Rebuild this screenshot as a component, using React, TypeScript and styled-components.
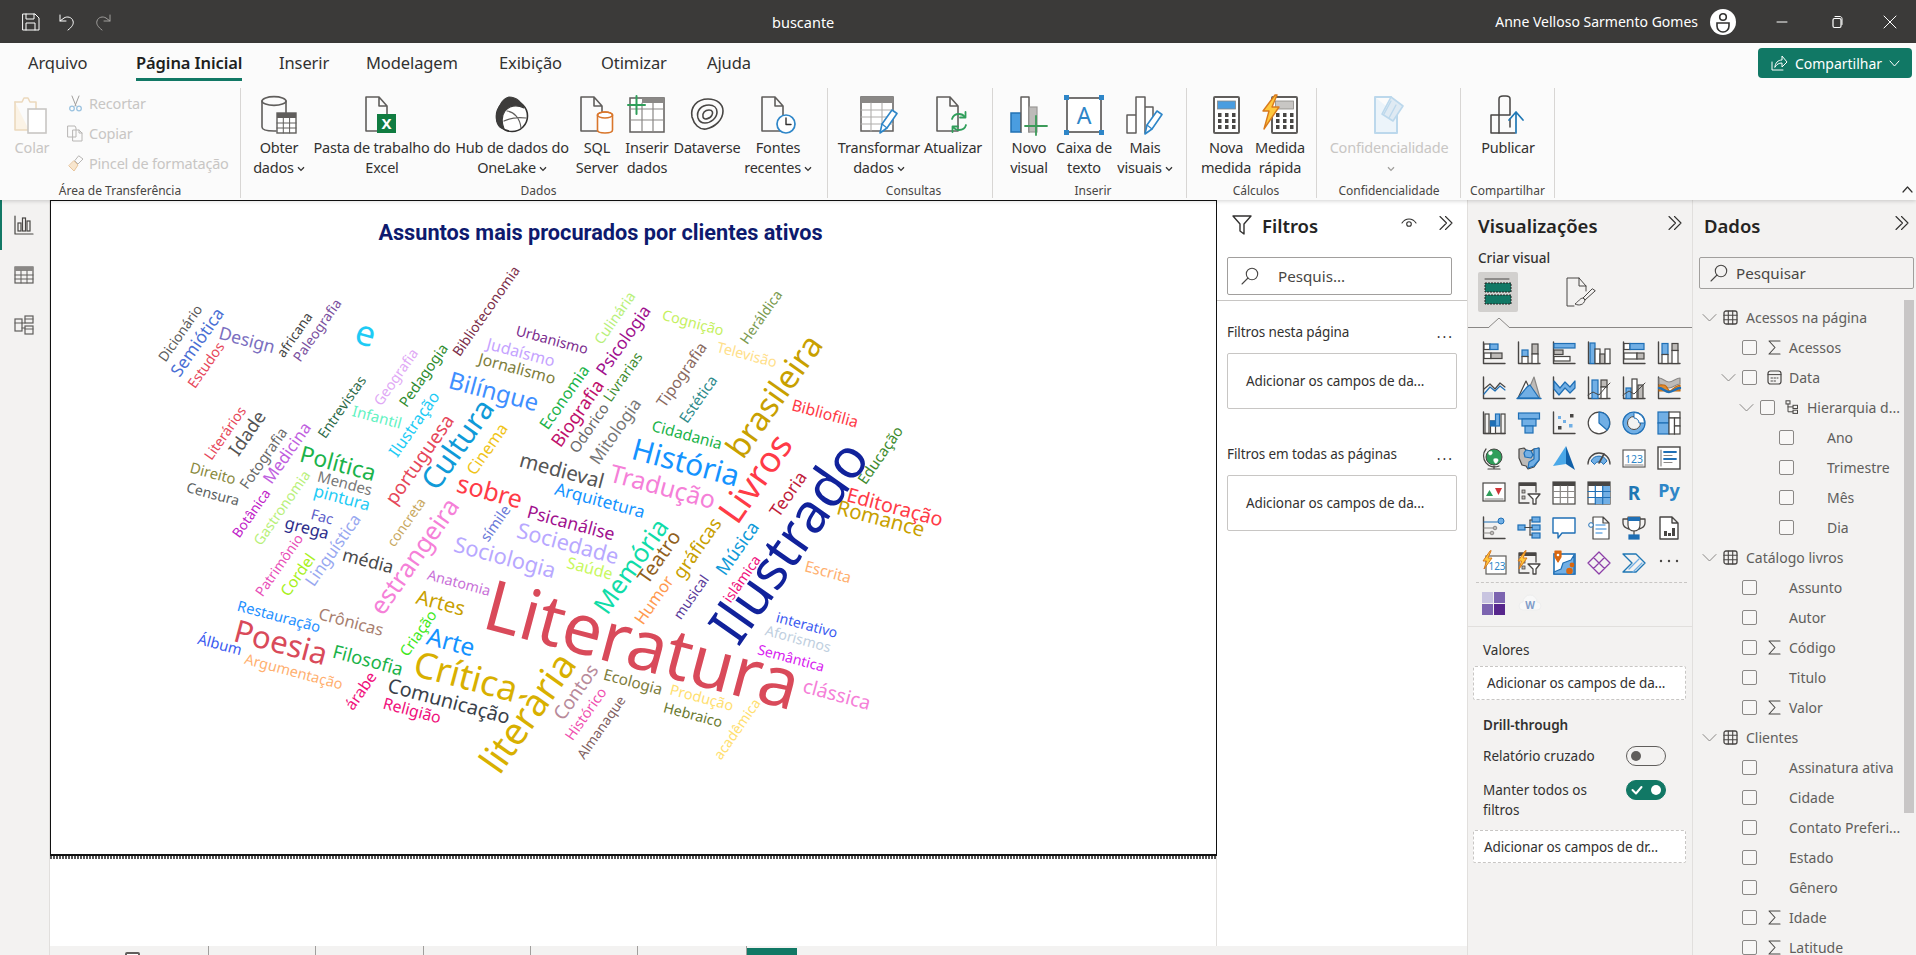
import React from "react";
import styled, { createGlobalStyle } from "styled-components";

const UI = '"Noto Sans", "Open Sans", sans-serif';
const GREEN = "#117865";
const D = "#484644";
const B = "#1f6fb5";
const L = "#71afe5";
const G = "#bebbb8";
const W = "#ffffff";

const Global = createGlobalStyle`
  html, body { margin: 0; padding: 0; background: #fff; overflow: hidden; }
  * { box-sizing: border-box; }
`;

const Page = styled.div`
  width: 1916px; height: 955px; display: flex; flex-direction: column; overflow: hidden;
  font-family: ${UI}; color: #323130; background: #fff;
`;

/* ---------- title bar ---------- */
const TitleBar = styled.header`
  height: 43px; background: #3b3a39; color: #fff; display: flex; align-items: center; flex: none;
`;
const QuickTools = styled.div`
  width: 772px; padding-left: 22px; display: flex; align-items: center; gap: 18px;
`;
const DocName = styled.div`font-size: 14.5px;`;
const Account = styled.div`margin-left: auto; display: flex; align-items: center; height: 100%;`;
const UserName = styled.span`font-size: 14px; margin-right: 12px;`;
const Avatar = styled.div`
  width: 26px; height: 26px; border-radius: 50%; background: #fff; margin-right: 18px;
  display: flex; align-items: center; justify-content: center;
`;
const WinButton = styled.div<{ $w: number }>`
  width: ${(p) => p.$w}px; height: 100%; display: flex; align-items: center; justify-content: center;
`;

/* ---------- ribbon ---------- */
const Ribbon = styled.section`
  height: 157px; flex: none; background: #fbfbfb; position: relative; z-index: 2;
  box-shadow: 0 1px 4px rgba(0, 0, 0, 0.18);
`;
const TabsRow = styled.nav`height: 39px; display: flex; padding-left: 28px;`;
const TabItem = styled.div<{ $w: number }>`width: ${(p) => p.$w}px; display: flex;`;
const TabLabel = styled.span<{ $active?: boolean }>`
  height: 38px; padding-top: 8px; font-size: 16.5px; line-height: 24px; letter-spacing: -0.1px; white-space: nowrap;
  font-weight: ${(p) => (p.$active ? 600 : 400)};
  color: ${(p) => (p.$active ? "#201f1e" : "#323130")};
  border-bottom: 3px solid ${(p) => (p.$active ? GREEN : "transparent")};
`;
const ShareButton = styled.div`
  margin: 5px 4px 4px auto; width: 154px; background: ${GREEN}; border-radius: 4px; color: #fff;
  display: flex; align-items: center; justify-content: center; gap: 7px; font-size: 14px;
`;
const Commands = styled.div`display: flex; margin-top: 6px; height: 110px;`;
const Group = styled.div<{ $w: number; $pad?: number; $last?: boolean }>`
  width: ${(p) => p.$w}px; flex: none; display: flex; flex-direction: column;
  border-right: ${(p) => (p.$last ? "none" : "1px solid #d8d6d4")};
  padding-left: ${(p) => p.$pad ?? 0}px;
`;
const GroupBody = styled.div`height: 96px; display: flex;`;
const GroupLabel = styled.div<{ $shift?: number }>`
  height: 14px; font-size: 12px; line-height: 14px; text-align: center; color: #484644; white-space: nowrap;
  margin-left: ${(p) => p.$shift ?? 0}px;
`;
const CmdButton = styled.div<{ $w: number; $off?: boolean }>`
  width: ${(p) => p.$w}px; flex: none; display: flex; flex-direction: column; align-items: center; padding-top: 7px;
  font-size: 14.5px; line-height: 20px; text-align: center; white-space: nowrap; letter-spacing: -0.2px;
  color: ${(p) => (p.$off ? "#c8c6c4" : "#323130")};
`;
const CmdIcon = styled.div`height: 40px; margin-bottom: 2px; display: flex; align-items: center; justify-content: center;`;
const SmallColumn = styled.div`display: flex; flex-direction: column; gap: 6px; padding: 3px 0 0 3px;`;
const SmallAction = styled.div`
  height: 24px; display: flex; align-items: center; gap: 5px; font-size: 14.5px; letter-spacing: -0.2px; color: #c8c6c4; white-space: nowrap;
`;
const Collapse = styled.div`position: absolute; right: 3px; bottom: 5px; line-height: 0;`;

/* ---------- main ---------- */
const Main = styled.main`flex: 1; display: flex; min-height: 0;`;
const Rail = styled.aside`width: 50px; flex: none; background: #f3f2f1; border-right: 1px solid #e1dfdd;`;
const RailItem = styled.div<{ $active?: boolean }>`
  height: 50px; display: flex; align-items: center; justify-content: center; padding-right: 4px;
  border-left: 2px solid ${(p) => (p.$active ? GREEN : "transparent")};
`;
const Center = styled.div`width: 1417px; flex: none; display: flex; flex-direction: column;`;
const CenterTop = styled.div`flex: 1; display: flex; min-height: 0;`;
const Canvas = styled.div`width: 1167px; flex: none; background: #fff; border-right: 1px solid #e1dfdd; display: flex; flex-direction: column;`;
const Report = styled.div`
  width: 1167px; height: 656px; flex: none; position: relative; background: #fff;
  border: 1px solid #111; border-bottom-width: 2px; overflow: hidden;
`;
const VisualTitle = styled.h1`
  margin: 0; padding: 19px 66px 0 0; text-align: center; font-family: Roboto, "Liberation Sans", sans-serif;
  font-weight: 700; font-size: 21.7px; line-height: 26px; color: #0d1a6e;
`;
const Word = styled.span<{ $x: number; $y: number; $size: number; $angle: number; $color: string }>`
  position: absolute; left: ${(p) => p.$x}px; top: ${(p) => p.$y}px; white-space: nowrap; line-height: 1;
  font-size: ${(p) => p.$size.toFixed(1)}px; color: ${(p) => p.$color};
  transform: translate(-50%, -50%) rotate(${(p) => p.$angle}deg);
`;
const DottedEdge = styled.div`
  height: 3px; flex: none;
  background: repeating-linear-gradient(90deg, #555 0, #555 2px, #fff 2px, #fff 3px);
`;
const PageTabs = styled.div`height: 9px; flex: none; background: #f3f2f1; display: flex; overflow: hidden;`;
const PageTab = styled.div<{ $w: number }>`
  width: ${(p) => p.$w}px; height: 9px; border-right: 1px solid #a19f9d; flex: none; position: relative;
`;
const PageTabGlyph = styled.div`
  position: absolute; left: 75px; top: 6px; width: 15px; height: 8px; border: 2px solid #605e5c; border-radius: 2px 2px 0 0; background: #fff;
`;
const PageTabActive = styled.div`width: 50px; height: 7px; margin-top: 2px; background: ${GREEN};`;

/* ---------- filters ---------- */
const Filters = styled.aside`width: 250px; flex: none; background: #fff; display: flex; flex-direction: column;`;
const PaneHeader = styled.div<{ $left: number; $right: number }>`
  height: 50px; flex: none; display: flex; align-items: center; padding: 0 ${(p) => p.$right}px 0 ${(p) => p.$left}px;
`;
const PaneTitle = styled.div<{ $ml?: number }>`
  margin-left: ${(p) => p.$ml ?? 0}px; font-size: 18.5px; font-weight: 600; color: #252423; white-space: nowrap;
`;
const HeaderTools = styled.div`margin-left: auto; display: flex; align-items: center; gap: 21px; padding-bottom: 4px;`;
const SearchBox = styled.div<{ $w: number; $h: number; $ml: number; $gap: number; $pl: number }>`
  flex: none; width: ${(p) => p.$w}px; height: ${(p) => p.$h}px; margin: 7px 0 0 ${(p) => p.$ml}px;
  border: 1px solid #a19f9d; border-radius: 2px; display: flex; align-items: center;
  padding-left: ${(p) => p.$pl}px; gap: ${(p) => p.$gap}px; font-size: 15.2px; color: #484644;
`;
const PaneRule = styled.div`height: 1px; flex: none; margin-top: 5px; background: #c8c6c4;`;
const FilterHead = styled.div<{ $mt: number }>`
  height: 18px; flex: none; margin: ${(p) => p.$mt}px 0 0 10px; width: 225px;
  display: flex; justify-content: space-between; font-size: 13.5px; line-height: 18px; letter-spacing: -0.1px; color: #323130;
`;
const Dots = styled.span`font-size: 14px; letter-spacing: 2px; color: #323130; line-height: 20px; margin-right: -2px;`;
const FilterWell = styled.div`
  flex: none; width: 230px; height: 56px; margin: 12px 0 0 10px; border: 1px solid #c8c6c4; border-radius: 2px;
  display: flex; align-items: center; padding-left: 18px; font-size: 13.5px; letter-spacing: -0.1px; color: #323130; white-space: nowrap;
`;

/* ---------- visualizations ---------- */
const Viz = styled.aside`
  width: 226px; flex: none; background: #f3f2f1; border-left: 1px solid #e1dfdd; border-right: 1px solid #e1dfdd;
  display: flex; flex-direction: column; overflow: hidden;
`;
const SubHead = styled.div`height: 16px; flex: none; margin-left: 10px; font-size: 13.5px; line-height: 16px; font-weight: 500; color: #323130;`;
const BuildRow = styled.div`height: 40px; flex: none; margin: 6px 0 0 10px; display: flex; align-items: center;`;
const BuildActive = styled.div`
  width: 40px; height: 40px; border-radius: 2px; background: #d2d0ce; display: flex; align-items: center; justify-content: center;
`;
const BuildOther = styled.div`margin-left: 48px; line-height: 0;`;
const BuildDivider = styled.div`height: 16px; flex: none; position: relative; border-bottom: 1px solid #8a8886;`;
const Caret = styled.svg`position: absolute; left: 20px; bottom: -1px;`;
const VizGrid = styled.div`
  flex: none; display: grid; grid-template-columns: repeat(6, 35px); grid-auto-rows: 35px; padding-left: 8px; margin-top: 7px;
`;
const VizCell = styled.div`display: flex; align-items: center; justify-content: center;`;
const DashRule = styled.div`flex: none; height: 0; margin: 2px 5px 0 8px; border-top: 1px dashed #c8c6c4;`;
const ExtraRow = styled.div`height: 34px; flex: none; margin-top: 3px; padding-left: 14px; display: flex; align-items: center; gap: 13px;`;
const SolidRule = styled.div`height: 1px; flex: none; margin-top: 6px; background: #e1dfdd;`;
const FieldHead = styled.div<{ $mt: number; $bold?: boolean }>`
  flex: none; margin: ${(p) => p.$mt}px 0 0 15px; font-size: 13.5px; line-height: 18px;
  font-weight: ${(p) => (p.$bold ? 600 : 400)}; color: #323130;
`;
const DropWell = styled.div<{ $h: number; $mt: number; $pl: number }>`
  flex: none; width: 213px; height: ${(p) => p.$h}px; margin: ${(p) => p.$mt}px 0 0 5px; background: #fff;
  border: 1px dashed #c8c6c4; border-radius: 2px; display: flex; align-items: center; padding-left: ${(p) => p.$pl}px;
  font-size: 13.5px; letter-spacing: -0.1px; color: #323130; white-space: nowrap;
`;
const ToggleRow = styled.div<{ $mt: number }>`
  flex: none; margin: ${(p) => p.$mt}px 0 0 15px; width: 183px; display: flex; justify-content: space-between; align-items: flex-start;
  font-size: 13.5px; line-height: 20px; color: #323130;
`;
const ToggleText = styled.div`width: 125px;`;
const Toggle = styled.div<{ $on?: boolean }>`
  width: 40px; height: 20px; border-radius: 10px; flex: none; display: flex; align-items: center; padding: 0 4px;
  justify-content: ${(p) => (p.$on ? "space-between" : "flex-start")};
  background: ${(p) => (p.$on ? GREEN : "transparent")};
  border: 1px solid ${(p) => (p.$on ? GREEN : "#605e5c")};
`;
const Knob = styled.div<{ $on?: boolean }>`
  width: 10px; height: 10px; border-radius: 50%; background: ${(p) => (p.$on ? "#fff" : "#605e5c")};
`;

/* ---------- data ---------- */
const Data = styled.aside`flex: 1; background: #f3f2f1; display: flex; flex-direction: column; position: relative; overflow: hidden;`;
const Tree = styled.ul`list-style: none; margin: 13px 0 0; padding: 0;`;
const TreeRow = styled.li<{ $pl: number }>`
  height: 30px; display: flex; align-items: center; padding-left: ${(p) => p.$pl}px;
  font-size: 14px; color: #605e5c; white-space: nowrap;
`;
const Box = styled.span`
  width: 15px; height: 15px; flex: none; border: 1px solid #8a8886; border-radius: 2px; background: #f8f7f6;
`;
const Slot = styled.span<{ $w: number; $ml: number }>`
  width: ${(p) => p.$w}px; margin-left: ${(p) => p.$ml}px; flex: none; display: flex; align-items: center; justify-content: center; line-height: 0;
`;
const RowText = styled.span<{ $ml: number }>`margin-left: ${(p) => p.$ml}px;`;
const Scrollbar = styled.div`position: absolute; right: 2px; top: 100px; width: 10px; height: 513px; background: #c8c6c6;`;

/* ---------- icon primitives ---------- */
const Svg = styled.svg.attrs<{ $s: number }>((p) => ({
  width: p.$s, height: p.$s, fill: "none", xmlns: "http://www.w3.org/2000/svg",
}))<{ $s: number }>`display: block; flex: none; overflow: visible;`;

type IconProps = { s?: number };
const R = ({ x, y, w, h, f = "none", c = D, sw = 1.2 }: { x: number; y: number; w: number; h: number; f?: string; c?: string; sw?: number }) => (
  <rect x={x} y={y} width={w} height={h} fill={f} stroke={c} strokeWidth={sw} />
);
const P = ({ d, f = "none", c = D, sw = 1.2 }: { d: string; f?: string; c?: string; sw?: number }) => (
  <path d={d} fill={f} stroke={c} strokeWidth={sw} strokeLinejoin="round" strokeLinecap="round" />
);
const Axis = () => <P d="M1.5 1v21.5H23" sw={1.4} />;
const Doc = ({ c = "#605e5c" }: { c?: string }) => <P d="M4 2h13l8 9v25H4z M17 2v9h8" c={c} sw={1.6} />;
const Pencil = ({ x = 0, y = 0 }: { x?: number; y?: number }) => (
  <g transform={`translate(${x} ${y})`}>
    <P d="M0 24 2 15 12 1l5 3.5L7 19z" f="#ffffff" c="#2e86c8" sw={1.6} />
    <P d="M2 15l5 4" c="#2e86c8" />
  </g>
);

const Chevrons = ({ s = 16 }: IconProps) => (
  <Svg $s={s} viewBox="0 0 16 16"><P d="M2 1.5 8.5 8 2 14.5M7.5 1.5 14 8l-6.5 6.5" c="#323130" sw={1.1} /></Svg>
);
const Magnifier = ({ s = 18 }: IconProps) => (
  <Svg $s={s} viewBox="0 0 18 18"><circle cx="11" cy="7" r="5.7" stroke="#484644" strokeWidth="1.1" /><P d="M7 11 1 17" sw={1.1} /></Svg>
);
const SmallChevron = ({ c = "#323130" }: { c?: string }) => (
  <svg width="8" height="6" viewBox="0 0 8 6" fill="none" style={{ marginLeft: 3, verticalAlign: 1 }}>
    <path d="M1 1.2 4 4.4 7 1.2" stroke={c} strokeWidth="1.3" />
  </svg>
);
const TreeChevron = () => (
  <Svg $s={15} viewBox="0 0 15 15"><P d="M1 4.5 7.5 11 14 4.5" c="#8a8886" sw={1} /></Svg>
);
const TableGlyph = () => (
  <Svg $s={15} viewBox="0 0 15 15">
    <rect x="1" y="1" width="13" height="13" rx="2" stroke="#484644" strokeWidth="1.3" />
    <P d="M1 5.2h13M1 9.8h13M5.3 1v13M9.7 1v13" sw={1.1} />
  </Svg>
);
const SigmaGlyph = () => (
  <Svg $s={15} viewBox="0 0 15 15"><P d="M13 1H2l6 6.5L2 14h11" sw={1.1} /></Svg>
);
const CalendarGlyph = () => (
  <Svg $s={15} viewBox="0 0 15 15">
    <rect x="1" y="1" width="13" height="13" rx="2.5" stroke="#484644" strokeWidth="1.2" />
    <P d="M1 4.6h13M4 8h1.5M7 8h1.5M10 8h1M4 11h1.5M7 11h1.5" sw={1} />
  </Svg>
);
const HierarchyGlyph = () => (
  <Svg $s={14} viewBox="0 0 14 14">
    <R x={1} y={0.8} w={4} h={3.2} sw={1} /><R x={8} y={5.3} w={4.5} h={3.2} sw={1} /><R x={8} y={10.2} w={4.5} h={3.2} sw={1} />
    <P d="M3 4v7.8h5M3 6.9h5" sw={1} />
  </Svg>
);

/* ---------- ribbon icons ---------- */
const I40 = ({ children }: { children: React.ReactNode }) => <Svg $s={40} viewBox="0 0 40 40">{children}</Svg>;
const PasteIcon = () => (
  <I40>
    <P d="M3 7h7l2-4h4l2 4h6v8" c="#ecd9bd" sw={1.6} /><P d="M3 7v28h14" c="#ecd9bd" f="#fbf3e6" sw={1.6} />
    <R x={16} y={14} w={18} h={24} f="#fff" c="#c8c6c4" sw={1.6} />
  </I40>
);
const GetDataIcon = () => (
  <I40>
    <ellipse cx="15" cy="6" rx="12" ry="4.4" stroke="#605e5c" strokeWidth="1.6" />
    <P d="M3 6v26c0 2.5 5 4 12 4h2M27 6v12" c="#605e5c" sw={1.6} />
    <R x={18} y={18} w={19} h={20} f="#fff" c="#605e5c" sw={1.4} />
    <rect x="18" y="18" width="19" height="5" fill="#605e5c" />
    <P d="M18 28h19M18 33h19M24.3 23v15M30.6 23v15" c="#605e5c" sw={1} />
  </I40>
);
const ExcelIcon = () => (
  <I40>
    <Doc /><rect x="15" y="19" width="19" height="19" fill="#107c41" />
    <text x="24.5" y="34" textAnchor="middle" fontSize="15" fontWeight="700" fill="#fff" fontFamily={UI}>X</text>
  </I40>
);
const OneLakeIcon = () => (
  <I40>
    <circle cx="20" cy="21" r="15.5" stroke="#323130" strokeWidth="1.6" fill="#fff" />
    <P d="M17 2c8 0 13 6 15 11-8-4-15-2-19 3-3 4-4 10-1 18C6 33 3 26 5 18 7 9 12 3 17 2z" f="#3d3c3b" c="#3d3c3b" />
    <P d="M15 16c7 1 13 7 14 17M12 26c6-3 13-4 22-3" c="#605e5c" />
  </I40>
);
const SqlIcon = () => (
  <I40>
    <Doc />
    <ellipse cx="28" cy="20" rx="7.5" ry="3" fill="#fff" stroke="#d9762b" strokeWidth="1.6" />
    <P d="M20.5 20v15c0 2 3 3 7.5 3s7.5-1 7.5-3V20" f="#fff" c="#d9762b" sw={1.6} />
    <ellipse cx="28" cy="20" rx="7.5" ry="3" stroke="#d9762b" strokeWidth="1.6" />
  </I40>
);
const EnterDataIcon = () => (
  <I40>
    <R x={3} y={3} w={34} h={34} c="#605e5c" sw={1.5} f="#fff" />
    <rect x="15" y="3" width="22" height="5" fill="#8a8886" />
    <P d="M3 14h34M3 25h34M15 8v29M26 8v29" c="#8a8886" sw={1.2} />
    <P d="M1 10h17M9.5 1v18" c="#2f9e5a" sw={2} />
  </I40>
);
const DataverseIcon = () => (
  <I40>
    <P d="M5 22C3 12 10 4 21 4c9 0 15 5 15 12 0 9-8 16-17 18-7 1-12-5-14-12z" c="#484644" sw={1.6} />
    <P d="M11 23c-2-7 3-13 11-13 5 0 8 3 8 7 0 6-6 11-12 11-3 0-6-2-7-5z" c="#484644" sw={1.6} />
    <P d="M16 22c-1-4 2-7 6-7s4 3 3 5c-1 3-8 6-9 2z" c="#484644" sw={1.6} />
  </I40>
);
const RecentIcon = () => (
  <I40>
    <Doc />
    <circle cx="28" cy="29" r="9" fill="#fff" stroke="#2e86c8" strokeWidth="1.7" />
    <P d="M28 23v6.5h5" c="#323130" sw={1.4} />
  </I40>
);
const TransformIcon = () => (
  <I40>
    <R x={2} y={2} w={32} h={34} c="#605e5c" sw={1.5} f="#fff" />
    <rect x="2" y="2" width="32" height="6" fill="#8a8886" />
    <P d="M2 15h32M2 22h32M2 29h32M12 8v28M23 8v28" c="#b0aeac" sw={1.1} />
    <Pencil x={21} y={14} />
  </I40>
);
const RefreshIcon = () => (
  <I40>
    <Doc />
    <P d="M19 24c1-3.5 4-5 7-5 2.500 0 4.500 1 6 3M33 30c-1 3.500-4 5-7 5-2.500 0-4.500-1-6-3" c="#2f9e5a" sw={1.8} />
    <P d="M32.500 17v5.500H27M19.500 37v-5.500H25" c="#2f9e5a" sw={1.8} />
  </I40>
);
const NewVisualIcon = () => (
  <I40>
    <R x={2} y={18} w={10} h={19} f="#4a9de0" c="#2272b4" sw={1.5} />
    <P d="M12 37V2h8v35" c="#605e5c" sw={1.5} f="#fff" /><R x={20} y={12} w={8} h={25} f="#bdbbb9" c="#9a9896" sw={1.2} />
    <P d="M16 31h22M27 21v19" c="#3b9a58" sw={1.8} />
  </I40>
);
const TextBoxIcon = () => (
  <I40>
    <R x={3} y={3} w={34} h={34} c="#484644" sw={1.5} f="#fff" />
    <g fill="#2e86c8"><rect x="0" y="0" width="5" height="5" /><rect x="35" y="0" width="5" height="5" /><rect x="0" y="35" width="5" height="5" /><rect x="35" y="35" width="5" height="5" /></g>
    <text x="20" y="29" textAnchor="middle" fontSize="23" fill="#2e86c8" fontFamily={UI}>A</text>
  </I40>
);
const MoreVisualsIcon = () => (
  <I40>
    <P d="M2 38V20h9v18zM11 38V2h9v36M20 38V12h8v14" c="#605e5c" sw={1.5} f="#fff" />
    <Pencil x={20} y={15} />
  </I40>
);
const Calculator = ({ x, w, screen }: { x: number; w: number; screen: string }) => (
  <g>
    <rect x={x} y={2} width={w} height={36} rx="1" fill="#fff" stroke="#605e5c" strokeWidth="2" />
    <rect x={x + 3.5} y={6} width={w - 7} height={8} fill={screen} stroke="#8a8886" strokeWidth=".8" />
    {[18, 24, 30].map((y) => [0, 1, 2].map((n) => (
      <rect key={`${y}${n}`} x={x + 4 + n * ((w - 11) / 2)} y={y} width="3.500" height="4" fill="#484644" />
    )))}
  </g>
);
const MeasureIcon = () => <I40><Calculator x={8} w={25} screen="#4a9de0" /></I40>;
const QuickMeasureIcon = () => (
  <I40>
    <Calculator x={12} w={25} screen="#c8c6c4" />
    <P d="M15 0 3 16h6L4 34l15-22h-7l5-12z" f="#ffc83d" c="#d97a1c" sw={1.4} />
  </I40>
);
const SensitivityIcon = () => (
  <I40>
    <P d="M6 2h16M6 2v36h22V20" c="#bcd8ec" sw={2} f="#ecf4fa" />
    <P d="M22 2 34 11 24 26l-11-7z" f="#dfeaf3" c="#bcd8ec" sw={1.6} />
    <P d="M22 6 15 19M27 10 20 23" c="#bcd8ec" sw={1.4} />
  </I40>
);
const PublishIcon = () => (
  <I40>
    <P d="M3 38V20h8v18zM11 38V4c0-2 2-3 4-3h3c2 0 4 1 4 3v16M11 20h11" c="#484644" sw={1.5} />
    <P d="M11 38h16M22 24v8" c="#484644" sw={1.5} />
    <P d="M28 38V18M21 25l7-8 7 8" c="#1f77b4" sw={1.7} />
  </I40>
);

/* ---------- visual gallery ---------- */
const Bolt = () => <P d="M8 0 1 10h3.500L2 18l8-11H6l3-7z" f="#ffc83d" c="#d97a1c" sw={1} />;
const SlicerShape = () => (
  <>
    <P d="M19 11V2H2v20h10" sw={1.3} /><rect x="2" y="2" width="17" height="3" fill={D} />
    <R x={5} y={9} w={3} h={3} f={G} c={D} sw={.8} /><R x={5} y={15} w={3} h={3} f={G} c={D} sw={.8} />
    <P d="M11 13h12l-4 5v5h-3v-5z" f={W} sw={1.3} />
  </>
);
const galleryIcons: React.ReactNode[] = [
  <><Axis /><R x={2} y={3} w={6} h={5.500} f={W} /><R x={8} y={3} w={8} h={5.500} f={L} c={B} /><R x={2} y={12} w={7} h={5.500} f={W} /><R x={9} y={12} w={11} h={5.500} f={G} /></>,
  <><Axis /><R x={5} y={9} w={6} h={6.500} f={L} c={B} /><R x={5} y={15.500} w={6} h={7} f={W} /><R x={15} y={3} w={6} h={10} f={G} /><R x={15} y={13} w={6} h={9.500} f={W} /></>,
  <><Axis /><R x={2} y={2.500} w={21} h={4.500} f={L} c={B} /><R x={2} y={9} w={9} h={4.500} f={G} /><R x={2} y={15.500} w={16} h={4.500} f={W} /></>,
  <><Axis /><R x={3} y={2} w={5} h={20.500} f={L} c={B} /><R x={8} y={8} w={5} h={14.500} f={W} /><R x={13} y={13} w={5} h={9.500} f={G} /><R x={18} y={8} w={5} h={14.500} f={W} /></>,
  <><Axis /><R x={2} y={2.500} w={6} h={6} f={W} /><R x={8} y={2.500} w={14} h={6} f={L} c={B} /><R x={2} y={12} w={13} h={6} f={W} /><R x={15} y={12} w={7} h={6} f={G} /></>,
  <><Axis /><R x={5} y={2.500} w={6} h={11} f={L} c={B} /><R x={5} y={13.500} w={6} h={9} f={W} /><R x={15} y={2.500} w={6} h={7} f={G} /><R x={15} y={9.500} w={6} h={13} f={W} /></>,
  <><Axis /><P d="M2 13l6-5 5 5 5-6 5 4" /><P d="M2 18l6-7 5 4 5-5 5 4" c={B} /></>,
  <><P d="M8 22 17 1l6 21z" f={G} c="#8a8886" /><P d="M1 22 9 5l8 17z" f={W} /><P d="M1 22l9-11 3-2 9 13z" f={L} c={B} /><P d="M0 22.500h24" c={B} sw={1.4} /></>,
  <><Axis /><P d="M2 5l6 7 5-6 5 5 5-6v7l-5 5-5-5-6 7-5-6z" f={L} c={B} /></>,
  <><Axis /><R x={5} y={4} w={6} h={18.500} f={L} c={B} /><R x={14} y={4} w={6} h={7} f={G} /><R x={14} y={11} w={6} h={11.500} f={W} /><P d="M1 19l5-3 6 3 6-7 5-5" sw={1} /></>,
  <><Axis /><R x={4} y={12} w={5} h={10.500} f={L} c={B} /><R x={10} y={3} w={5} h={19.500} f={W} /><R x={16} y={9} w={5} h={13.500} f={G} /><P d="M1 19l6-4 5 3 6-6 5-5" sw={1} /></>,
  <><Axis /><P d="M2 2c4 0 6 4 10 4s7-4 11-4v6c-4 0-7 4-11 4S6 8 2 8z" f={G} c="#8a8886" /><P d="M2 9h5c3 0 4 6 6 6s4-5 10-6v6H2z" f="#e08a2e" c="#c46a10" /><P d="M2 12c4 0 6 4 10 4s7-4 11-4" c={B} sw={2.4} /></>,
  <><Axis /><R x={3} y={3} w={4} h={19.500} /><R x={8.500} y={10} w={5} h={12.500} f={W} /><R x={8.500} y={10} w={5} h={5} f={B} c={B} /><R x={13.500} y={3} w={4} h={12} f={L} c={B} /><R x={19} y={3} w={4} h={19.500} /></>,
  <><R x={1.500} y={2} w={21} h={6} f={L} c={B} /><R x={5} y={8} w={14} h={7} f={L} c={B} /><R x={8} y={15} w={8} h={7} f={L} c={B} /></>,
  <><Axis /><g fill={L}><rect x="6" y="5" width="3" height="3" /><rect x="11" y="9" width="3" height="3" /><rect x="17" y="13" width="3.500" height="3.500" /></g><g fill={D}><rect x="18" y="3" width="3.500" height="3.500" /><rect x="6" y="15" width="3.500" height="3.500" /></g></>,
  <><circle cx="12" cy="12" r="10.800" fill={W} stroke={D} strokeWidth="1.2" /><P d="M12 1.200A10.800 10.800 0 0 1 20 19L12 12z" f={L} c={B} /></>,
  <><circle cx="12" cy="12" r="9" stroke={L} strokeWidth="4.500" /><circle cx="12" cy="12" r="11" stroke={B} strokeWidth="1.2" /><circle cx="12" cy="12" r="6.500" stroke={D} strokeWidth="1" /><path d="M12 1.500A10.500 10.500 0 0 1 22.500 12H17A5 5 0 0 0 12 7z" fill={W} stroke={B} strokeWidth="1" /></>,
  <><R x={1} y={1} w={11} h={11} f={L} c={B} /><R x={1} y={12} w={11} h={11} f={L} c={B} /><R x={12} y={1} w={11} h={6} f={W} /><R x={12} y={7} w={5.500} h={16} f={W} /><R x={17.500} y={7} w={5.500} h={8} f={W} /><R x={17.500} y={15} w={5.500} h={8} f={W} /></>,
  <><circle cx="12" cy="11" r="8" fill="#2f9e5a" stroke={D} strokeWidth="1" /><P d="M7 6c3-2 4 0 3 2S5 9 7 6zM12 13c3-1 5 0 4 2s-2 3-3 2-2-3-1-4z" f={W} c={W} sw={.4} /><P d="M4 3A11 11 0 0 0 17 20M12 20v2.500M6 23h12" sw={1.2} /></>,
  <><P d="M2 3l5-1 2 2 5 1 3-2 5-1v12l-5 7-6 2-2-3-4-1-3-7z" f={G} c={D} /><P d="M9 4l5 1 2 4-2 3-6-1-1-4zM17 3l5-1v12l-5 6-6 2 1-6 5-3z" f={L} c={B} /></>,
  <><path d="M14 0 23 24 14 18z" fill="#1060a8" /><path d="M14 0 1 20 14 18z" fill="#4aa8e8" /></>,
  <><P d="M1 18a11 11 0 0 1 22 0" sw={1.3} /><path d="M4 15a9 9 0 0 1 16 0l-3.500 3.500a5 5 0 0 0-9 0z" fill={L} stroke={B} strokeWidth="1" /><P d="M17 8l-5 9" sw={1.6} /></>,
  <><R x={1} y={4} w={22} h={17} f={W} c="#605e5c" /><text x="12" y="17" textAnchor="middle" fontSize="10.500" fill="#2e86c8" fontFamily={UI}>123</text><P d="M3 19h18" c="#8a8886" /></>,
  <><R x={1} y={1} w={22} h={22} f={W} sw={1.4} /><P d="M4 4v16" c="#8a8886" /><P d="M7 6h12" c={B} sw={1.8} /><P d="M7 9.500h8" c="#8a8886" sw={1.2} /><P d="M7 13h12" c={B} sw={1.8} /><P d="M7 16.500h8" c="#8a8886" sw={1.2} /></>,
  <><R x={1} y={2} w={22} h={18} f={W} /><path d="M4 15l3.500-6 3.500 6z" fill="#2f9e5a" /><path d="M13 7h7l-3.500 7z" fill="#d13438" /><P d="M3 18h18" c="#8a8886" /></>,
  <SlicerShape />,
  <><R x={1} y={1} w={22} h={22} f={W} /><rect x="1" y="1" width="22" height="4" fill={D} /><P d="M1 10.500h22M1 16.500h22M8.300 5v18M15.700 5v18" c="#8a8886" /></>,
  <><R x={1} y={1} w={22} h={22} f={W} /><rect x="1" y="1" width="22" height="4" fill={D} /><rect x="15.700" y="5" width="7.300" height="18" fill={L} /><rect x="8.300" y="16.500" width="14.700" height="6.500" fill={L} /><P d="M1 10.500h22M1 16.500h22M8.300 5v18M15.700 5v18" c={B} /></>,
  <text x="12" y="19" textAnchor="middle" fontSize="19" fontWeight="700" fill="#1f77b4" fontFamily={UI}>R</text>,
  <text x="12" y="16" textAnchor="middle" fontSize="18" fontWeight="700" fill="#2e86c8" fontFamily={UI}>Py</text>,
  <><Axis /><P d="M2 6h15" c={B} /><circle cx="19" cy="5" r="3" fill={L} stroke={B} /><P d="M2 12h9" c="#8a8886" /><circle cx="13" cy="12" r="1.800" fill={G} stroke="#8a8886" /><P d="M2 17h6" c="#8a8886" /><circle cx="10" cy="17" r="1.800" fill={G} stroke="#8a8886" /></>,
  <><R x={1} y={9} w={7} h={5} f={L} c={B} /><P d="M8 11.500h5M13 4v15" /><R x={15} y={1} w={8} h={5} f={L} c={B} /><R x={15} y={9} w={8} h={5} f={L} c={B} /><R x={15} y={17} w={8} h={5} f={L} c={B} /><P d="M13 4h2M13 11.500h2M13 19h2" /></>,
  <P d="M1 2h22v15H10l-4 5v-5H1z" f={W} c={B} sw={1.4} />,
  <><P d="M6 1h10l6 6v16H6z M16 1v6h6" f={W} sw={1.2} /><circle cx="4" cy="9" r="2.300" fill={W} stroke={B} /><P d="M9 9h9M9 13h10M9 17h6" c={L} sw={1.4} /></>,
  <><P d="M6 3H1v4c0 3 2 5 6 6M18 3h5v4c0 3-2 5-6 6" sw={1.3} /><P d="M6 1h12v8c0 4-3 6-6 6s-6-2-6-6z" f={W} /><rect x="6" y="1" width="12" height="4" fill={B} /><P d="M12 15v4" /><R x={7} y={19} w={10} h={4} f={B} c={B} /></>,
  <><P d="M3 1h12l6 6v16H3z M15 1v6h6" f={W} sw={1.4} /><rect x="7" y="15" width="3" height="5" fill={D} /><rect x="11" y="17" width="3" height="3" fill={D} /><rect x="15" y="12" width="3" height="8" fill={D} /></>,
  <><R x={4} y={5} w={20} h={18} f={W} c="#605e5c" /><text x="15" y="19" textAnchor="middle" fontSize="10" fill="#2e86c8" fontFamily={UI}>123</text><Bolt /></>,
  <><SlicerShape /><Bolt /></>,
  <><R x={2} y={3} w={21} h={20} f={W} c={B} sw={1.6} /><P d="M2 21l7-3 2-6 8-3 3-5v19H2z" f={L} c={B} /><P d="M3 0h6v6l-3 5-3-5z" f="#d9670f" c="#d9670f" /><circle cx="6" cy="4" r="1.300" fill={W} /><circle cx="20" cy="14" r="2.400" fill="#d9670f" /><circle cx="17.500" cy="20" r="3.300" fill="#d9670f" /></>,
  <><P d="M12 1 23 12 12 23 1 12zM12 1l5.500 5.500L12 12 6.500 6.500zM12 12l5.500 5.500L12 23l-5.500-5.500z" c="#8c3fa8" sw={1.3} /></>,
  <><P d="M1 3h13l9 9-9 9H1l9-9z" c="#1f77b4" sw={1.4} /><P d="M7 18 17 8M11 21 20 12" c={L} sw={1.3} /></>,
  <g fill={D}><circle cx="4" cy="10" r="1.200" /><circle cx="12" cy="10" r="1.200" /><circle cx="20" cy="10" r="1.200" /></g>,
];

/* ---------- word cloud data: text, centre x, centre y, raw run length, steep?, colour ---------- */
type WordRow = [string, number, number, number, boolean, string];
const words: WordRow[] = [
  ["Dicionário", 180, 333, 73, true, "#5b5b5b"], ["Semiótica", 197, 342, 88, true, "#4a6fd4"], ["Estudos", 206, 365, 58, true, "#e6475a"],
  ["Design", 247, 340, 64, false, "#7b6fc0"], ["africana", 295, 335, 57, true, "#444444"], ["Paleografia", 317, 330, 81, true, "#7a4f9e"],
  ["e", 366, 332, 22, false, "#1ecbf5"], ["Biblioteconomia", 486, 311, 118, true, "#7c2f4b"], ["Urbanismo", 552, 340, 82, false, "#7b2d8f"],
  ["Judaísmo", 521, 352, 77, false, "#c5a3ff"], ["Jornalismo", 517, 369, 88, false, "#7d7d3c"], ["Bilíngue", 494, 391, 102, false, "#3f8fff"],
  ["Geografia", 396, 377, 73, true, "#e0a8f5"], ["Pedagogia", 423, 375, 81, true, "#2e8b2e"], ["Entrevistas", 342, 407, 81, true, "#2e6b4a"],
  ["Infantil", 377, 417, 56, false, "#5ff2c2"], ["Ilustração", 414, 424, 84, true, "#1ecbf5"], ["Cultura", 457, 444, 114, true, "#0f9ad8"],
  ["portuguesa", 419, 459, 116, true, "#e6475a"], ["Literários", 225, 433, 68, true, "#e6475a"], ["Idade", 247, 433, 55, true, "#555555"],
  ["Fotografia", 263, 458, 79, true, "#6a6a6a"], ["Medicina", 287, 453, 78, true, "#c060e0"], ["Política", 338, 464, 86, false, "#1bb34a"],
  ["Direito", 213, 473, 52, false, "#8a8a40"], ["Censura", 213, 494, 60, false, "#5a6060"], ["Mendes", 345, 483, 62, false, "#777777"],
  ["pintura", 342, 498, 64, false, "#1ecbf5"], ["Cinema", 487, 449, 65, true, "#f0c419"], ["sobre", 490, 491, 74, false, "#ff3b47"],
  ["medieval", 562, 470, 96, false, "#555555"], ["Economia", 564, 397, 82, true, "#1bb34a"], ["Biografia", 577, 413, 86, true, "#c0106c"],
  ["Psicologia", 623, 340, 90, true, "#a0108e"], ["Culinária", 615, 318, 67, true, "#b8f07a"], ["Livrarias", 623, 377, 63, true, "#3e8b2e"],
  ["Odorico", 589, 428, 63, true, "#6a6a6a"], ["Mitologia", 615, 431, 84, true, "#777777"], ["Tipografia", 682, 375, 83, true, "#8a6a60"],
  ["Estética", 698, 399, 60, true, "#2e8b8b"], ["Cognição", 693, 323, 70, false, "#c5f060"], ["Televisão", 747, 355, 68, false, "#ffe08a"],
  ["Heráldica", 761, 317, 69, true, "#7a9a50"], ["brasileira", 774, 396, 157, true, "#c8a000"], ["Bibliofilia", 825, 414, 76, false, "#ff3b47"],
  ["Educação", 880, 455, 74, true, "#3e8b2e"], ["Cidadania", 687, 435, 80, false, "#1bb34a"], ["História", 686, 462, 122, false, "#1493ff"],
  ["Tradução", 663, 486, 120, false, "#f580d8"], ["Arquitetura", 600, 500, 103, false, "#1493ff"], ["Livros", 755, 478, 110, true, "#ff3b47"],
  ["Teoria", 788, 494, 56, true, "#c0203a"], ["Editoração", 895, 507, 110, false, "#ff3b47"], ["Romance", 881, 518, 100, false, "#c8a000"],
  ["Ilustrado", 788, 541, 258, true, "#11229b"], ["Literatura", 643, 643, 359, false, "#d94a5a"], ["Botânica", 251, 513, 62, true, "#c020c8"],
  ["Gastronomia", 282, 508, 97, true, "#b8f07a"], ["grega", 307, 528, 50, false, "#2e2e8b"], ["Fac", 322, 517, 25, false, "#5a5ac8"],
  ["Linguística", 333, 550, 93, true, "#98a8f0"], ["Patrimônio", 279, 565, 80, true, "#e850b8"], ["Cordel", 298, 575, 53, true, "#a8f020"],
  ["média", 368, 561, 58, false, "#4a4a4a"], ["concreta", 406, 522, 62, true, "#c8a860"], ["estrangeira", 414, 556, 150, true, "#f580d8"],
  ["símile", 495, 523, 45, true, "#6a7ad8"], ["Psicanálise", 571, 523, 100, false, "#a0108e"], ["Sociedade", 568, 543, 116, false, "#b8a8ff"],
  ["Sociologia", 505, 557, 116, false, "#b8a8ff"], ["Anatomia", 459, 583, 72, false, "#c870d8"], ["Artes", 441, 602, 55, false, "#c8a000"],
  ["Crônicas", 351, 622, 74, false, "#a88070"], ["Restauração", 279, 616, 95, false, "#1e90ff"], ["Poesia", 281, 642, 106, false, "#d94a5a"],
  ["Álbum", 220, 644, 50, false, "#3a5af0"], ["Argumentação", 294, 671, 112, false, "#ffb070"], ["Filosofia", 368, 660, 80, false, "#1bb34a"],
  ["Criação", 418, 633, 58, true, "#40e820"], ["Arte", 451, 642, 54, false, "#1493ff"], ["Crítica", 466, 676, 118, false, "#d8b000"],
  ["árabe", 361, 691, 47, true, "#f0107c"], ["Comunicação", 449, 701, 140, false, "#3a3f4a"], ["Religião", 412, 711, 66, false, "#f0107c"],
  ["literària", 527, 712, 152, true, "#d8b000"], ["Contos", 576, 692, 70, true, "#b88a9a"], ["Histórico", 586, 714, 67, true, "#f050b0"],
  ["Almanaque", 601, 727, 81, true, "#806060"], ["Ecologia", 633, 682, 67, false, "#7d7d3c"], ["Produção", 702, 697, 72, false, "#ffe070"],
  ["Hebraico", 693, 715, 67, false, "#6a7a30"], ["acadêmica", 737, 729, 78, true, "#ffe070"], ["clássica", 837, 694, 77, false, "#f580d8"],
  ["Semântica", 791, 658, 76, false, "#d820f0"], ["Aforismos", 798, 639, 75, false, "#c0cfe0"], ["interativo", 807, 625, 70, false, "#3a5af0"],
  ["Escrita", 828, 572, 53, false, "#ffb070"], ["islâmica", 742, 579, 60, true, "#f0107c"], ["Música", 737, 548, 67, true, "#0f9ad8"],
  ["musical", 691, 597, 56, true, "#5a3a9a"], ["gráficas", 697, 548, 77, true, "#c8a000"], ["Humor", 654, 600, 61, true, "#ff9a50"],
  ["Teatro", 659, 557, 66, true, "#906020"], ["Memória", 631, 566, 121, true, "#10dca8"], ["Saúde", 590, 568, 52, false, "#c8f860"],
];

const measureContext = document.createElement("canvas").getContext("2d");
const fitSize = (text: string, run: number) => {
  if (!measureContext) return run / 5;
  measureContext.font = `100px ${UI}`;
  return (run * 0.9 * 100) / measureContext.measureText(text).width;
};

const WordCloud = () => (
  <>
    {words.map(([text, x, y, run, steep, color]) => (
      <Word key={text} $x={x - 51} $y={y - 201} $size={fitSize(text, run)} $angle={steep ? -55 : 15} $color={color}>
        {text}
      </Word>
    ))}
  </>
);

type Cmd = { w: number; l1: string; l2?: string; more?: boolean; icon: React.ReactNode; off?: boolean };
const CmdBtn = ({ w, l1, l2, more, icon, off }: Cmd) => (
  <CmdButton $w={w} $off={off}>
    <CmdIcon>{icon}</CmdIcon>
    <span>{l1}</span>
    <span>{l2}{more && <SmallChevron c={off ? "#a19f9d" : "#323130"} />}</span>
  </CmdButton>
);

const tabs: [string, number, boolean?][] = [
  ["Arquivo", 108], ["Página Inicial", 143, true], ["Inserir", 87], ["Modelagem", 133], ["Exibição", 102], ["Otimizar", 106], ["Ajuda", 60],
];

type Kind = "table" | "field" | "sum" | "date" | "hier" | "leaf";
const tree: [Kind, string][] = [
  ["table", "Acessos na página"], ["sum", "Acessos"], ["date", "Data"], ["hier", "Hierarquia d..."], ["leaf", "Ano"], ["leaf", "Trimestre"], ["leaf", "Mês"], ["leaf", "Dia"],
  ["table", "Catálogo livros"], ["field", "Assunto"], ["field", "Autor"], ["sum", "Código"], ["field", "Titulo"], ["sum", "Valor"],
  ["table", "Clientes"], ["field", "Assinatura ativa"], ["field", "Cidade"], ["field", "Contato Preferi..."], ["field", "Estado"], ["field", "Gênero"], ["sum", "Idade"], ["sum", "Latitude"],
];

const TreeLine = ({ kind, text }: { kind: Kind; text: string }) => {
  if (kind === "table")
    return <TreeRow $pl={9}><TreeChevron /><Slot $w={15} $ml={6}><TableGlyph /></Slot><RowText $ml={8}>{text}</RowText></TreeRow>;
  if (kind === "date")
    return <TreeRow $pl={28}><TreeChevron /><Slot $w={0} $ml={6} /><Box /><Slot $w={15} $ml={10}><CalendarGlyph /></Slot><RowText $ml={7}>{text}</RowText></TreeRow>;
  if (kind === "hier")
    return <TreeRow $pl={46}><TreeChevron /><Slot $w={0} $ml={6} /><Box /><Slot $w={14} $ml={10}><HierarchyGlyph /></Slot><RowText $ml={8}>{text}</RowText></TreeRow>;
  if (kind === "leaf")
    return <TreeRow $pl={86}><Box /><RowText $ml={33}>{text}</RowText></TreeRow>;
  return <TreeRow $pl={49}><Box /><Slot $w={15} $ml={10}>{kind === "sum" && <SigmaGlyph />}</Slot><RowText $ml={7}>{text}</RowText></TreeRow>;
};

export default function App() {
  return (
    <Page>
      <Global />
      <TitleBar>
        <QuickTools>
          <Svg $s={18} viewBox="0 0 18 18"><P d="M1 1h12l4 4v12H1zM4 17v-7h9v7M4 1v5h8V1" c="#fff" sw={1} /></Svg>
          <Svg $s={18} viewBox="0 0 18 18"><P d="M10 17c4-3 6-6 5-9-1-4-6-5-9-3L2 8M2 2v6h6" c="#fff" sw={1} /></Svg>
          <Svg $s={18} viewBox="0 0 18 18"><P d="M8 17c-4-3-6-6-5-9 1-4 6-5 9-3l4 3M16 2v6h-6" c="#a19f9d" sw={1} /></Svg>
        </QuickTools>
        <DocName>buscante</DocName>
        <Account>
          <UserName>Anne Velloso Sarmento Gomes</UserName>
          <Avatar>
            <Svg $s={20} viewBox="0 0 20 20"><circle cx="10" cy="5" r="3.300" stroke="#323130" strokeWidth="1.600" /><path d="M4 11h12v3a6 6 0 0 1-12 0z" stroke="#323130" strokeWidth="1.600" /></Svg>
          </Avatar>
          <WinButton $w={55}><Svg $s={12} viewBox="0 0 12 12"><P d="M1 6h10" c="#fff" sw={1} /></Svg></WinButton>
          <WinButton $w={55}><Svg $s={14} viewBox="0 0 14 14"><rect x="3" y="3.500" width="8" height="9" rx="1.500" stroke="#fff" strokeWidth="1.200" /><P d="M5 1.500h5c1 0 2 1 2 2v6" c="#fff" sw={1} /></Svg></WinButton>
          <WinButton $w={52}><Svg $s={14} viewBox="0 0 14 14"><P d="M1 1l12 12M13 1 1 13" c="#fff" sw={1} /></Svg></WinButton>
        </Account>
      </TitleBar>

      <Ribbon>
        <TabsRow>
          {tabs.map(([t, w, a]) => <TabItem key={t} $w={w}><TabLabel $active={a}>{t}</TabLabel></TabItem>)}
          <ShareButton>
            <Svg $s={18} viewBox="0 0 18 18"><P d="M2 8v8h11M5 13c0-4 3-7 7-7V2l5 6-5 5V9c-3 0-5 1-7 4z" c="#fff" sw={1} /></Svg>
            Compartilhar
            <Svg $s={11} viewBox="0 0 11 11"><P d="M1 3l4.500 5L10 3" c="#fff" sw={1} /></Svg>
          </ShareButton>
        </TabsRow>
        <Commands>
          <Group $w={241}>
            <GroupBody>
              <CmdBtn w={64} l1="Colar" icon={<PasteIcon />} off />
              <SmallColumn>
                <SmallAction>
                  <Svg $s={17} viewBox="0 0 17 17"><P d="M5 1l4 10M12 1 8 11" c="#a19f9d" sw={1} /><circle cx="5" cy="13.500" r="2.300" stroke="#9cc3e0" strokeWidth="1.300" /><circle cx="12" cy="13.500" r="2.300" stroke="#9cc3e0" strokeWidth="1.300" /></Svg>
                  Recortar
                </SmallAction>
                <SmallAction>
                  <Svg $s={17} viewBox="0 0 17 17"><P d="M1 1h7l1 2v9H1zM6 5h6l3 3v8H6zM12 5v3h3" c="#b8b6b4" sw={1} /></Svg>
                  Copiar
                </SmallAction>
                <SmallAction>
                  <Svg $s={17} viewBox="0 0 17 17"><P d="M12 1l4 3-5 5-3-3z" c="#b8b6b4" sw={1} /><P d="M7 6l4 4-4 6-5-5z" f="#f8e6ce" c="#e8c49a" sw={1} /></Svg>
                  Pincel de formatação
                </SmallAction>
              </SmallColumn>
            </GroupBody>
            <GroupLabel>Área de Transferência</GroupLabel>
          </Group>
          <Group $w={587} $pad={9}>
            <GroupBody>
              <CmdBtn w={58} l1="Obter" l2="dados" more icon={<GetDataIcon />} />
              <CmdBtn w={148} l1="Pasta de trabalho do" l2="Excel" icon={<ExcelIcon />} />
              <CmdBtn w={112} l1="Hub de dados do" l2="OneLake" more icon={<OneLakeIcon />} />
              <CmdBtn w={58} l1="SQL" l2="Server" icon={<SqlIcon />} />
              <CmdBtn w={42} l1="Inserir" l2="dados" icon={<EnterDataIcon />} />
              <CmdBtn w={78} l1="Dataverse" icon={<DataverseIcon />} />
              <CmdBtn w={64} l1="Fontes" l2="recentes" more icon={<RecentIcon />} />
            </GroupBody>
            <GroupLabel>Dados</GroupLabel>
          </Group>
          <Group $w={165} $pad={7}>
            <GroupBody>
              <CmdBtn w={88} l1="Transformar" l2="dados" more icon={<TransformIcon />} />
              <CmdBtn w={60} l1="Atualizar" icon={<RefreshIcon />} />
            </GroupBody>
            <GroupLabel>Consultas</GroupLabel>
          </Group>
          <Group $w={194} $pad={7}>
            <GroupBody>
              <CmdBtn w={58} l1="Novo" l2="visual" icon={<NewVisualIcon />} />
              <CmdBtn w={52} l1="Caixa de" l2="texto" icon={<TextBoxIcon />} />
              <CmdBtn w={70} l1="Mais" l2="visuais" more icon={<MoreVisualsIcon />} />
            </GroupBody>
            <GroupLabel>Inserir</GroupLabel>
          </Group>
          <Group $w={130} $pad={9}>
            <GroupBody>
              <CmdBtn w={60} l1="Nova" l2="medida" icon={<MeasureIcon />} />
              <CmdBtn w={48} l1="Medida" l2="rápida" icon={<QuickMeasureIcon />} />
            </GroupBody>
            <GroupLabel>Cálculos</GroupLabel>
          </Group>
          <Group $w={144} $pad={1}>
            <GroupBody>
              <CmdBtn w={142} l1="Confidencialidade" l2="" more off icon={<SensitivityIcon />} />
            </GroupBody>
            <GroupLabel>Confidencialidade</GroupLabel>
          </Group>
          <Group $w={94}>
            <GroupBody>
              <CmdBtn w={94} l1="Publicar" icon={<PublishIcon />} />
            </GroupBody>
            <GroupLabel>Compartilhar</GroupLabel>
          </Group>
        </Commands>
        <Collapse><Svg $s={11} viewBox="0 0 11 11"><P d="M1 8l4.500-5L10 8" c="#323130" sw={1.200} /></Svg></Collapse>
      </Ribbon>

      <Main>
        <Rail>
          <RailItem $active>
            <Svg $s={20} viewBox="0 0 20 20"><P d="M1 1v18h18" sw={1.2} /><R x={4} y={8} w={3} h={8} /><R x={8.500} y={3} w={3} h={13} /><R x={13} y={6} w={3} h={10} /></Svg>
          </RailItem>
          <RailItem>
            <Svg $s={20} viewBox="0 0 20 20"><R x={1} y={2} w={18} h={16} c="#605e5c" /><rect x="1" y="2" width="18" height="4" fill="#8a8886" /><P d="M1 10h18M1 14h18M7 6v12M13 6v12" c="#605e5c" sw={1} /></Svg>
          </RailItem>
          <RailItem>
            <Svg $s={20} viewBox="0 0 20 20"><R x={1} y={4} w={7} h={12} c="#605e5c" /><R x={11} y={1} w={8} h={7} c="#605e5c" /><R x={11} y={11} w={8} h={8} c="#605e5c" /><P d="M8 8h3M8 13h3M1 8h7M11 4h8M11 14h8" c="#605e5c" sw={1} /></Svg>
          </RailItem>
        </Rail>
        <Center>
          <CenterTop>
            <Canvas>
              <Report>
                <VisualTitle>Assuntos mais procurados por clientes ativos</VisualTitle>
                <WordCloud />
              </Report>
              <DottedEdge />
            </Canvas>
            <Filters>
              <PaneHeader $left={15} $right={13}>
                <Svg $s={20} viewBox="0 0 20 20"><P d="M1 1h18l-7 8v10l-4-3V9z" c="#323130" sw={1.400} /></Svg>
                <PaneTitle $ml={10}>Filtros</PaneTitle>
                <HeaderTools>
                  <Svg $s={16} viewBox="0 0 16 16"><P d="M1 8c2-3 4-4 7-4s5 1 7 4" c="#323130" sw={1.100} /><circle cx="8" cy="9" r="2.300" stroke="#323130" strokeWidth="1.100" /></Svg>
                  <Chevrons />
                </HeaderTools>
              </PaneHeader>
              <SearchBox $w={225} $h={38} $ml={10} $pl={13} $gap={19}><Magnifier />Pesquis...</SearchBox>
              <PaneRule />
              <FilterHead $mt={22}>Filtros nesta página<Dots>...</Dots></FilterHead>
              <FilterWell>Adicionar os campos de da...</FilterWell>
              <FilterHead $mt={36}>Filtros em todas as páginas<Dots>...</Dots></FilterHead>
              <FilterWell>Adicionar os campos de da...</FilterWell>
            </Filters>
          </CenterTop>
          <PageTabs>
            <PageTab $w={159}><PageTabGlyph /></PageTab>
            <PageTab $w={107} /><PageTab $w={108} /><PageTab $w={107} /><PageTab $w={107} /><PageTab $w={109} />
            <PageTabActive />
          </PageTabs>
        </Center>
        <Viz>
          <PaneHeader $left={10} $right={9}>
            <PaneTitle>Visualizações</PaneTitle>
            <HeaderTools><Chevrons /></HeaderTools>
          </PaneHeader>
          <SubHead>Criar visual</SubHead>
          <BuildRow>
            <BuildActive>
              <Svg $s={30} viewBox="0 0 30 30">
                <P d="M2 2h24" sw={1} />
                <rect x="2" y="6" width="26" height="9" fill={GREEN} stroke="#252423" strokeDasharray="2 1" />
                <rect x="2" y="18" width="26" height="9" fill={GREEN} stroke="#252423" strokeDasharray="2 1" />
              </Svg>
            </BuildActive>
            <BuildOther>
              <Svg $s={30} viewBox="0 0 30 30"><P d="M8 29H1V1h12l7 8v5" sw={1} /><P d="M13 1v8h7" sw={1} /><P d="M29 14 19 23l-2-2 9-9z" sw={1} /><P d="M17 21c-3 0-4 3-8 6 4 2 9 1 10-4z" sw={1} /></Svg>
            </BuildOther>
          </BuildRow>
          <BuildDivider>
            <Caret width="22" height="10" viewBox="0 0 22 10"><path d="M0 10 11 0l11 10" fill="#f3f2f1" stroke="#8a8886" strokeWidth="1" /></Caret>
          </BuildDivider>
          <VizGrid>
            {galleryIcons.map((icon, i) => (
              <VizCell key={i}><Svg $s={24} viewBox="0 0 24 24">{icon}</Svg></VizCell>
            ))}
          </VizGrid>
          <DashRule />
          <ExtraRow>
            <Svg $s={23} viewBox="0 0 23 23">
              <rect width="11" height="11" fill="#c8c4e0" /><rect x="12" width="11" height="11" fill="#7c64b0" /><rect y="12" width="11" height="11" fill="#7c64b0" /><rect x="12" y="12" width="11" height="11" fill="#57268c" />
            </Svg>
            <Svg $s={24} viewBox="0 0 24 24">
              <path d="M5 19a4 4 0 0 1 0-8 7 7 0 0 1 14 0 4 4 0 0 1 0 8z" fill="#f8f8f8" stroke="#eeeeee" />
              <text x="12" y="18" textAnchor="middle" fontSize="10" fontWeight="700" fill="#7f9cc8" fontFamily={UI}>W</text>
            </Svg>
          </ExtraRow>
          <SolidRule />
          <FieldHead $mt={14}>Valores</FieldHead>
          <DropWell $h={34} $mt={7} $pl={13}>Adicionar os campos de da...</DropWell>
          <FieldHead $mt={16} $bold>Drill-through</FieldHead>
          <ToggleRow $mt={12}><ToggleText>Relatório cruzado</ToggleText><Toggle><Knob /></Toggle></ToggleRow>
          <ToggleRow $mt={14}>
            <ToggleText>Manter todos os filtros</ToggleText>
            <Toggle $on>
              <Svg $s={12} viewBox="0 0 12 12"><P d="M1.500 6 5 9.500 10.500 3" c="#fff" sw={2} /></Svg>
              <Knob $on />
            </Toggle>
          </ToggleRow>
          <DropWell $h={33} $mt={10} $pl={10}>Adicionar os campos de dr...</DropWell>
        </Viz>
        <Data>
          <PaneHeader $left={11} $right={6}>
            <PaneTitle>Dados</PaneTitle>
            <HeaderTools><Chevrons /></HeaderTools>
          </PaneHeader>
          <SearchBox $w={215} $h={32} $ml={6} $pl={10} $gap={8}><Magnifier />Pesquisar</SearchBox>
          <Tree>
            {tree.map(([kind, text], i) => <TreeLine key={i} kind={kind} text={text} />)}
          </Tree>
          <Scrollbar />
        </Data>
      </Main>
    </Page>
  );
}
